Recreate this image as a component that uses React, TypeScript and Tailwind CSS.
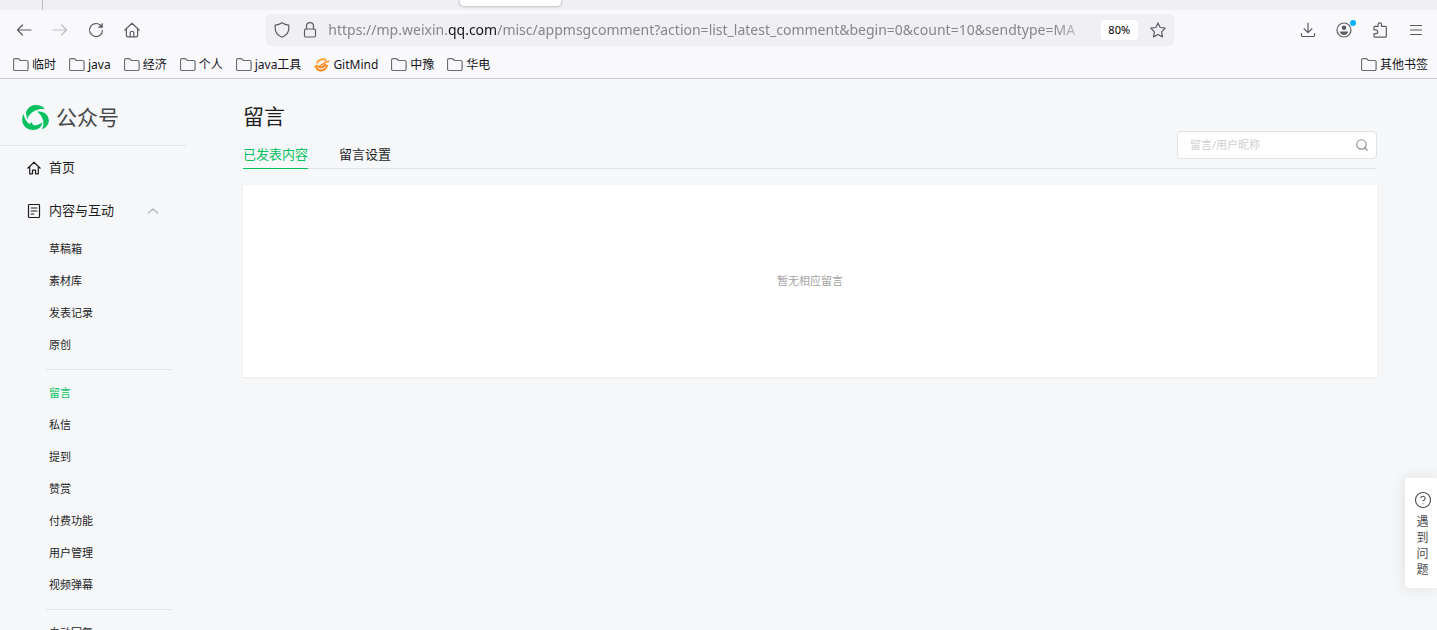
import type { ReactNode } from "react"
import { CircleQuestionMark, Search } from "lucide-react"

const MAIN_FONT = "font-['Noto_Sans','Noto_Sans_CJK_SC',sans-serif]"

const bookmarks = ["临时", "java", "经济", "个人", "java工具", "GitMind", "中豫", "华电"]

const menuGroups = [
  ["草稿箱", "素材库", "发表记录", "原创"],
  ["留言", "私信", "提到", "赞赏", "付费功能", "用户管理", "视频弹幕"],
  ["自动回复"],
]

function Icon({ children, className = "size-4" }: { children: ReactNode; className?: string }) {
  return (
    <svg
      viewBox="0 0 16 16"
      className={`shrink-0 ${className}`}
      fill="none"
      stroke="currentColor"
      strokeWidth="1.2"
      strokeLinecap="round"
      strokeLinejoin="round"
      aria-hidden="true"
    >
      {children}
    </svg>
  )
}

function ToolButton({ label, muted, children }: { label: string; muted?: boolean; children: ReactNode }) {
  return (
    <button
      aria-label={label}
      className={`flex h-8 w-9 shrink-0 items-center justify-center ${muted ? "text-[#bfbfc4]" : "text-[#5b5b66]"}`}
    >
      {children}
    </button>
  )
}

function FolderIcon() {
  return (
    <Icon className="size-4 text-[#6b6b74]">
      <path d="M2 1.600h3.500l1.900 1.900h6.200A1.500 1.500 0 0 1 15.100 5v7a1.500 1.500 0 0 1-1.500 1.500H2A1.500 1.500 0 0 1 .5 12V3.100A1.500 1.500 0 0 1 2 1.600z" />
    </Icon>
  )
}

function GitMindIcon() {
  return (
    <svg viewBox="0 0 16 16" className="size-4 shrink-0" fill="none" strokeLinecap="round" aria-hidden="true">
      <path d="M11.800 3C9 1.200 5 2.600 3.200 5.600" stroke="#ffa53a" strokeWidth="2" />
      <path d="M2.600 8.500c-.3 2.600 1 4.500 3.400 4.900 3.200.5 6.200-1.600 7-4.600" stroke="#ff8a1f" strokeWidth="2" />
      <path d="M.8 9.800c3.200.4 5.400-.5 7.200-2.200S11.500 4.400 15 4.200" stroke="#ff9a30" strokeWidth="1.600" />
      <path d="M5.600 10.500c2.400.2 4.400-.8 5.800-3" stroke="#ff7a1a" strokeWidth="1.600" />
    </svg>
  )
}

function Bookmark({ name }: { name: string }) {
  return (
    <a href="#" className="flex shrink-0 items-center gap-[3px] text-xs text-[#15141a]">
      {name === "GitMind" ? <GitMindIcon /> : <FolderIcon />}
      {name}
    </a>
  )
}

function BrowserChrome() {
  return (
    <header className="shrink-0 border-b border-[#cccccf] bg-[#f9f9fb]">
      <div className="flex h-[10px] items-start bg-[#f0f0f4]">
        <div className="ml-[42px] h-full w-px bg-[#b8b8bd]" />
        <div className="ml-[417px] h-[6px] w-[101px] rounded-b bg-white shadow-[0_0_3px_rgba(0,0,0,0.4)]" />
      </div>

      <div className="flex h-10 items-center pr-[3px] pl-[6px]">
        <ToolButton label="后退">
          <Icon>
            <path d="M15 8H1.500M6.500 3 1.500 8l5 5" />
          </Icon>
        </ToolButton>
        <ToolButton label="前进" muted>
          <Icon>
            <path d="M1 8h13.500M9.500 3l5 5-5 5" />
          </Icon>
        </ToolButton>
        <ToolButton label="刷新">
          <Icon>
            <path d="M14.500 8.500A6.500 6.500 0 1 1 12.600 3.400" />
            <path d="M14.600 1.400v4.200h-4.200z" fill="currentColor" strokeWidth="0.500" />
          </Icon>
        </ToolButton>
        <ToolButton label="主页">
          <Icon>
            <path d="M.9 8 8 1.200 15.100 8M2.400 6.800v6.700c0 .8.500 1.300 1.300 1.300h8.600c.8 0 1.300-.5 1.300-1.300V6.800" />
            <path d="M6.200 14.500v-4a1 1 0 0 1 1-1h1.600a1 1 0 0 1 1 1v4" />
          </Icon>
        </ToolButton>

        <div className="grow-3 basis-0" />
        <div className="flex h-8 min-w-0 grow-23 basis-0 items-center rounded bg-[#f0f0f4] px-2 text-[#5b5b66]">
          <Icon>
            <path d="M8 .8c2 1.400 4.200 2.200 6.800 2.400v3c0 4-2.400 7.200-6.800 9-4.400-1.800-6.800-5-6.800-9v-3C3.800 3 6 2.200 8 .8z" />
          </Icon>
          <Icon className="ml-3 size-4">
            <rect x="2.500" y="7" width="11" height="8" rx="1.500" />
            <path d="M4.500 7V4.200a3.500 3.500 0 0 1 7 0V7" />
          </Icon>
          <div className="ml-[10px] min-w-0 flex-1 overflow-hidden mask-r-from-95% text-sm whitespace-nowrap text-[#86858c]">
            https://mp.weixin.<span className="text-[#15141a]">qq.com</span>
            /misc/appmsgcomment?action=list_latest_comment&amp;begin=0&amp;count=10&amp;sendtype=MA
          </div>
          <button className="ml-2 h-5 w-[37px] shrink-0 rounded-sm bg-white text-[11px] text-black">80%</button>
          <button aria-label="收藏" className="ml-3 shrink-0">
            <Icon>
              <path d="m8 .9 2.200 4.600 5 .7-3.600 3.600.9 5.100L8 12.500l-4.500 2.400.9-5.100L.8 6.200l5-.7z" />
            </Icon>
          </button>
        </div>
        <div className="grow-3 basis-0" />

        <ToolButton label="下载">
          <Icon>
            <path d="M8 1v9.500M4 6.800l4 3.800 4-3.800M1.300 11.500v1.600c0 .8.600 1.400 1.400 1.400h10.600c.8 0 1.400-.6 1.400-1.400v-1.600" />
          </Icon>
        </ToolButton>
        <ToolButton label="账户">
          <span className="relative">
            <Icon>
              <circle cx="8" cy="8" r="7" />
              <circle cx="8" cy="5.800" r="2.300" fill="currentColor" stroke="none" />
              <path d="M3.800 9.500h8.400c-.3 2.200-2 3.500-4.200 3.500s-3.900-1.300-4.200-3.500z" fill="currentColor" stroke="none" />
            </Icon>
            <span className="absolute -top-0.5 -right-1 size-1.5 rounded-full bg-[#00b3f4]" />
          </span>
        </ToolButton>
        <ToolButton label="扩展">
          <Icon>
            <path d="M2 7V5.200c0-.5.400-.8.900-.8h3.200V2.500a1.700 1.700 0 0 1 3.400 0v1.900h3.900c.5 0 .9.400.9.900v9c0 .5-.4.900-.9.900H2.900a.9.900 0 0 1-.9-.9v-2.700h1.800a1.900 1.900 0 0 0 0-3.800H2z" />
          </Icon>
        </ToolButton>
        <ToolButton label="菜单">
          <Icon>
            <path d="M2.500 3.500h11M2.500 8h11M2.500 12.500h11" />
          </Icon>
        </ToolButton>
      </div>

      <nav aria-label="书签" className="flex h-7 items-center gap-[13px] pt-0.5 pr-[9px] pl-[13px]">
        {bookmarks.map((name) => (
          <Bookmark key={name} name={name} />
        ))}
        <div className="ml-auto">
          <Bookmark name="其他书签" />
        </div>
      </nav>
    </header>
  )
}

function Logo() {
  return (
    <svg viewBox="0 0 81 76" className="h-[25px] w-[27px]" fill="#07c160" aria-hidden="true">
      <path d="M11 24C16 8 28 0 42 0c12 0 21 4 27 13-10-2-20-1-29 4-12 5-21 14-25 27-1-9-2-14-4-20z" />
      <path d="M45 20c20-3 36 9 36 27 0 12-8 22-21 27 4-8 6-17 4-26-3-12-9-20-19-28z" />
      <path d="M4 27c3 14 9 25 19 31l6-6 4 9c11 2 20-1 29-9-2 16-14 24-28 24C14 76 0 63 0 45c0-7 1-13 4-18z" />
    </svg>
  )
}

function Sidebar() {
  return (
    <aside className="w-[186px] shrink-0">
      <div className="flex h-[67px] items-center gap-[7px] border-b border-[#e1e2e4] pt-2.5 pl-[22px]">
        <Logo />
        <span className="text-[21px] leading-7 text-[#47484a]">公众号</span>
      </div>
      <nav className="text-[#1d1d1e]">
        <a href="#" className="flex h-[43px] items-center gap-[7px] pl-[26px] text-[13px]">
          <Icon>
            <path d="M1.800 8.200 8 2.200l6.200 6M3.700 7v6.800h2.800v-3.600h3v3.600h2.800V7" />
          </Icon>
          首页
        </a>
        <button className="flex h-[43px] w-full items-center gap-[7px] pr-[26px] pl-[26px] text-[13px]">
          <Icon>
            <rect x="2.500" y="1.500" width="11" height="13" rx="0.800" />
            <path d="M5.200 5h5.600M5.200 8h5.600M5.200 11h2.600" />
          </Icon>
          内容与互动
          <Icon className="ml-auto size-3.5 text-[#a5a6a8]">
            <path d="m2.500 10.500 5.500-5 5.500 5" />
          </Icon>
        </button>
        {menuGroups.map((group, i) => (
          <ul
            key={i}
            className={`mr-3.5 ml-[46px] pl-[3px] ${i > 0 ? "mt-2 border-t border-[#e1e2e4] pt-[7px]" : "pt-px"}`}
          >
            {group.map((item) => (
              <li key={item}>
                <a
                  href="#"
                  className={`flex h-8 items-center text-[11px] ${item === "留言" ? "text-[#07c160]" : ""}`}
                >
                  {item}
                </a>
              </li>
            ))}
          </ul>
        ))}
      </nav>
    </aside>
  )
}

function CommentPage() {
  return (
    <main className="min-w-0 flex-1 pt-[22px] pr-[60px] pl-[57px]">
      <h1 className="text-[21px] leading-[30px] text-[#1d1d1e]">留言</h1>
      <div className="flex items-end justify-between border-b border-[#e1e2e4]">
        <div className="-mb-px flex gap-[31px] text-[13px] text-[#1d1d1e]">
          <button className="border-b border-[#07c160] pb-1 leading-5 text-[#07c160]">已发表内容</button>
          <button className="border-b border-transparent pb-1 leading-5">留言设置</button>
        </div>
        <label className="mb-[9px] flex h-7 w-[200px] items-center rounded border border-[#e1e2e4] bg-white pr-[7px] pl-3">
          <input
            aria-label="搜索留言"
            placeholder="留言/用户昵称"
            className="min-w-0 flex-1 text-[11px] outline-none placeholder:text-[#cfcfcf]"
          />
          <Search className="size-[14px] text-[#8f8f8f]" />
        </label>
      </div>
      <div className="mt-4 flex h-48 items-center justify-center bg-white text-[11px] text-[#a3a3a3] shadow-[0_1px_2px_rgba(0,0,0,0.06)]">
        暂无相应留言
      </div>
    </main>
  )
}

export default function App() {
  return (
    <div className={`flex h-screen flex-col overflow-hidden bg-[#f6f7f9] ${MAIN_FONT}`}>
      <BrowserChrome />
      <div className="flex min-h-0 flex-1 overflow-hidden">
        <Sidebar />
        <CommentPage />
      </div>
      <button className="absolute right-0 bottom-[42px] flex w-8 flex-col items-center rounded-l-sm bg-white pt-[13px] pb-[10px] pl-[3px] text-[#4c4d4f] shadow-[0_0_16px_rgba(0,0,0,0.1)]">
        <CircleQuestionMark className="size-[18px]" strokeWidth={1.5} />
        <span className="mt-[5px] w-3 text-xs leading-4">遇到问题</span>
      </button>
    </div>
  )
}
